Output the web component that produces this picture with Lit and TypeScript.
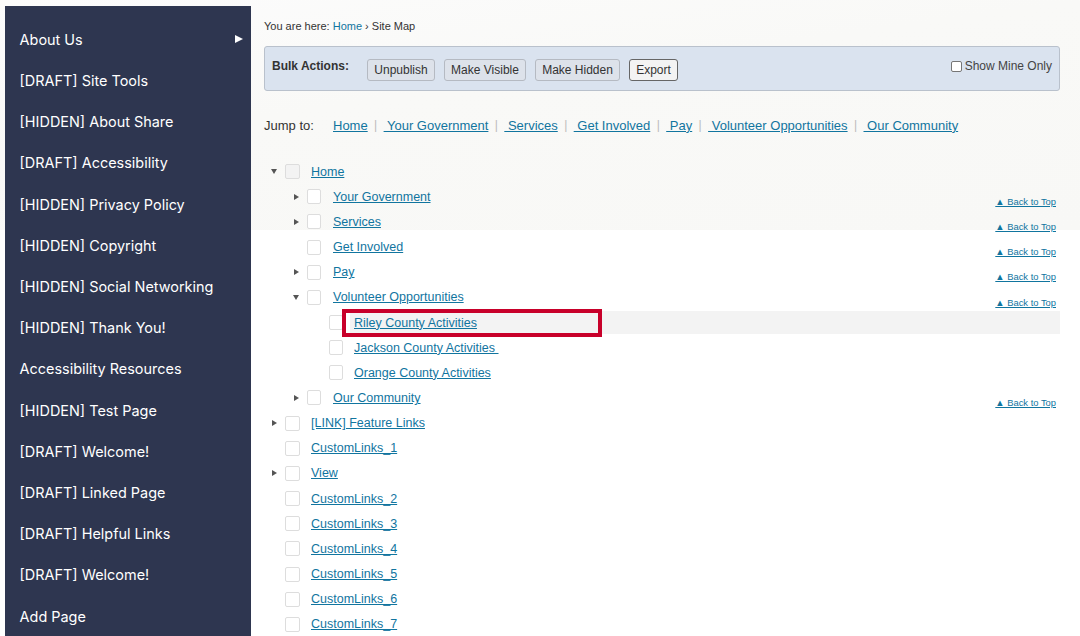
import { LitElement, html, css } from "lit";
import { customElement } from "lit/decorators.js";

type Row = { t: string; d: number; a?: "r" | "d"; top?: boolean; hl?: boolean; home?: boolean };

const NAV = ["About Us", "[DRAFT] Site Tools", "[HIDDEN] About Share", "[DRAFT] Accessibility", "[HIDDEN] Privacy Policy", "[HIDDEN] Copyright", "[HIDDEN] Social Networking", "[HIDDEN] Thank You!", "Accessibility Resources", "[HIDDEN] Test Page", "[DRAFT] Welcome!", "[DRAFT] Linked Page", "[DRAFT] Helpful Links", "[DRAFT] Welcome!", "Add Page"];
const JUMP = ["Home", " Your Government", " Services", " Get Involved", " Pay", " Volunteer Opportunities", " Our Community"];
const ROWS: Row[] = [
  { t: "Home", d: 0, a: "d", home: true },
  { t: "Your Government", d: 1, a: "r", top: true },
  { t: "Services", d: 1, a: "r", top: true },
  { t: "Get Involved", d: 1, top: true },
  { t: "Pay", d: 1, a: "r", top: true },
  { t: "Volunteer Opportunities", d: 1, a: "d", top: true },
  { t: "Riley County Activities", d: 2, hl: true },
  { t: "Jackson County Activities ", d: 2 },
  { t: "Orange County Activities", d: 2 },
  { t: "Our Community", d: 1, a: "r", top: true },
  { t: "[LINK] Feature Links", d: 0, a: "r" },
  { t: "CustomLinks_1", d: 0 },
  { t: "View", d: 0, a: "r" },
  { t: "CustomLinks_2", d: 0 },
  { t: "CustomLinks_3", d: 0 },
  { t: "CustomLinks_4", d: 0 },
  { t: "CustomLinks_5", d: 0 },
  { t: "CustomLinks_6", d: 0 },
  { t: "CustomLinks_7", d: 0 },
];

@customElement("app-root")
export class AppRoot extends LitElement {
  static styles = css`
    :host {
      display: flex;
      width: 1080px;
      height: 636px;
      overflow: hidden;
      font-family: "Liberation Sans", Arial, sans-serif;
      color: #333;
      background:
        linear-gradient(172deg, #fcfcfc 0%, #f9f9f7 40%, #f8f8f6 100%) top left / 100% 230px no-repeat,
        #fff;
    }
    .side {
      flex: none;
      box-sizing: border-box;
      width: 246px;
      margin: 6px 0 0 5px;
      padding-top: 12.8px;
      background: #2e3650;
      color: #fff;
      font-family: Inter, sans-serif;
      font-size: 14.45px;
    }
    .nav {
      height: 41.2px;
      display: flex;
      align-items: center;
      justify-content: space-between;
      padding: 0 8px 0 14.6px;
      white-space: nowrap;
    }
    .tri { width: 0; height: 0; border-left: 8px solid #fff; border-top: 4px solid transparent; border-bottom: 4px solid transparent; }
    .main { flex: 1; position: relative; padding: 19px 20px 0 13px; min-width: 0; }
    a { color: #11759f; text-decoration: underline; }
    .crumb { font-size: 11px; line-height: 14px; color: #333; }
    .crumb a { text-decoration: none; }
    .panel {
      box-sizing: border-box;
      margin-top: 13px;
      height: 45px;
      display: flex;
      align-items: center;
      padding: 0 7px;
      background: #dae3ef;
      border: 1px solid #b9c1cc;
      border-radius: 3px;
    }
    .bulk { font-size: 12px; font-weight: bold; width: 95px; margin-top: -5px; }
    .btn {
      box-sizing: border-box;
      height: 22px;
      margin: 2px 9px 0 0;
      display: flex;
      align-items: center;
      justify-content: center;
      font-size: 12px;
      background: #dde2ea;
      border: 1px solid #b5bac2;
      border-radius: 3px;
      color: #333;
    }
    .b1 { width: 68px; }
    .b2 { width: 82px; }
    .b3 { width: 85px; }
    .b4 { width: 49px; background: #f3f3f3; border-color: #666; }
    .mine { margin-left: auto; display: flex; align-items: center; font-size: 12px; margin-top: -5px; color: #444; }
    .box { box-sizing: border-box; width: 11px; height: 11px; background: #fff; border: 1px solid #767676; border-radius: 2px; margin-right: 3px; }
    .jump { display: flex; margin-top: 26px; height: 16px; align-items: center; font-size: 13px; white-space: pre; }
    .jl { width: 69px; }
    .sep { color: #bbb; margin: 0 6.4px; font-size: 12px; }
    .tree { margin-top: 26px; }
    .row {
      height: 25.17px;
      display: flex;
      align-items: center;
      font-size: 12.5px;
      white-space: pre;
      position: relative;
    }
    .d0 { padding-left: 6px; }
    .d1 { padding-left: 28px; }
    .d2 { padding-left: 50px; }
    .arr { flex: none; width: 15px; display: flex; align-items: center; }
    .ar { margin-left: 2px; width: 0; height: 0; border-left: 5px solid #555; border-top: 3.5px solid transparent; border-bottom: 3.5px solid transparent; }
    .ad { margin-left: 1px; width: 0; height: 0; border-top: 5px solid #555; border-left: 3.5px solid transparent; border-right: 3.5px solid transparent; }
    .cb { flex: none; box-sizing: border-box; width: 15px; height: 15px; background: #fff; border: 1px solid #ddd; border-radius: 2px; margin-right: 11px; }
    .d1 .cb { width: 14px; margin-right: 12px; }
    .d2 .cb { width: 14px; margin-right: 11px; }
    .cb.home { background: #f3f3f3; }
    .hl { position: absolute; left: 86px; right: 0; top: 1px; bottom: 1px; background: #f3f3f3; }
    .row a.lnk { position: relative; }
    .top { position: absolute; right: 4px; top: 11.8px; font-size: 9.4px; line-height: 11px; }
    .mark { position: absolute; box-sizing: border-box; left: 78px; top: -1px; width: 260px; height: 28px; border: 4px solid #c8002a; }
  `;

  render() {
    return html`
      <aside class="side">
        ${NAV.map((n, i) => html`<div class="nav"><span>${n}</span>${i === 0 ? html`<span class="tri"></span>` : ""}</div>`)}
      </aside>
      <main class="main">
        <div class="crumb">You are here: <a href="#">Home</a> › Site Map</div>
        <div class="panel">
          <span class="bulk">Bulk Actions:</span>
          <span class="btn b1">Unpublish</span>
          <span class="btn b2">Make Visible</span>
          <span class="btn b3">Make Hidden</span>
          <span class="btn b4">Export</span>
          <label class="mine"><span class="box"></span>Show Mine Only</label>
        </div>
        <div class="jump">
          <span class="jl">Jump to:</span>
          ${JUMP.map((j, i) => html`<a href="#">${j}</a>${i < JUMP.length - 1 ? html`<span class="sep">|</span>` : ""}`)}
        </div>
        <div class="tree">
          ${ROWS.map((r) => html`
            <div class="row d${r.d}">
              ${r.hl ? html`<span class="hl"></span>` : ""}
              <span class="arr">${r.a === "r" ? html`<span class="ar"></span>` : r.a === "d" ? html`<span class="ad"></span>` : ""}</span>
              <span class="cb ${r.home ? "home" : ""}"></span>
              <a class="lnk" href="#">${r.t}</a>
              ${r.top ? html`<a class="top" href="#">▲ Back to Top</a>` : ""}
              ${r.hl ? html`<span class="mark"></span>` : ""}
            </div>`)}
        </div>
      </main>
    `;
  }
}
